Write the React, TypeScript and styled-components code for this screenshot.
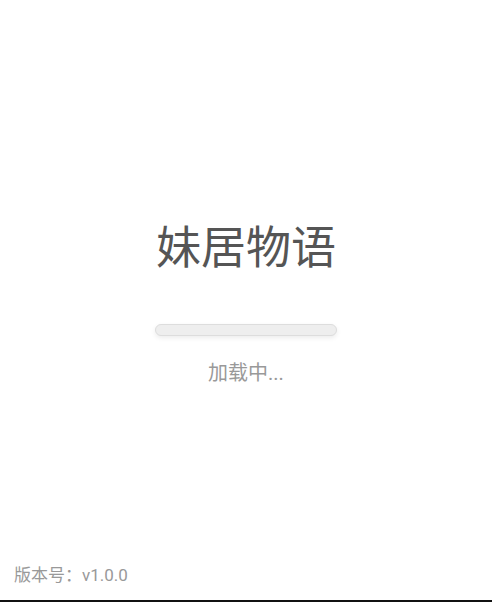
import React from "react";
import styled, { createGlobalStyle } from "styled-components";

const GlobalStyle = createGlobalStyle`
  html, body {
    margin: 0;
    padding: 0;
    background: #ffffff;
  }
  body {
    font-family: Roboto, "Noto Sans CJK SC", sans-serif;
  }
`;

const Page = styled.div`
  box-sizing: border-box;
  height: 602px;
  display: grid;
  grid-template-rows: 1fr auto 1fr;
  border-bottom: 2px solid #111111;
  background: #ffffff;
`;

const Center = styled.div`
  grid-row: 2;
  padding-top: 8px;
  display: flex;
  flex-direction: column;
  align-items: center;
`;

const Title = styled.h1`
  margin: 2px 0 0;
  font-size: 45px;
  line-height: 54px;
  font-weight: 400;
  color: #555555;
`;

const Track = styled.div`
  box-sizing: border-box;
  width: 182px;
  height: 12px;
  margin-top: 48px;
  border-radius: 6px;
  background: #eeeeee;
  border: 1px solid #dddddd;
  box-shadow: 0 2px 5px rgba(0, 0, 0, 0.08);
  overflow: hidden;
`;

const Fill = styled.div`
  height: 100%;
  background: #cccccc;
`;

const Status = styled.div`
  margin-top: 22px;
  font-size: 20px;
  line-height: 30px;
  color: #999999;
`;

const Footer = styled.div`
  grid-row: 3;
  align-self: end;
  padding: 0 0 13px 14px;
  font-size: 17px;
  line-height: 24px;
  color: #999999;
`;

export default function App() {
  const progress = 0;
  return (
    <>
      <GlobalStyle />
      <Page>
        <Center>
          <Title>妹居物语</Title>
          <Track>
            <Fill style={{ width: `${progress}%` }} />
          </Track>
          <Status>加载中...</Status>
        </Center>
        <Footer>版本号：v1.0.0</Footer>
      </Page>
    </>
  );
}
